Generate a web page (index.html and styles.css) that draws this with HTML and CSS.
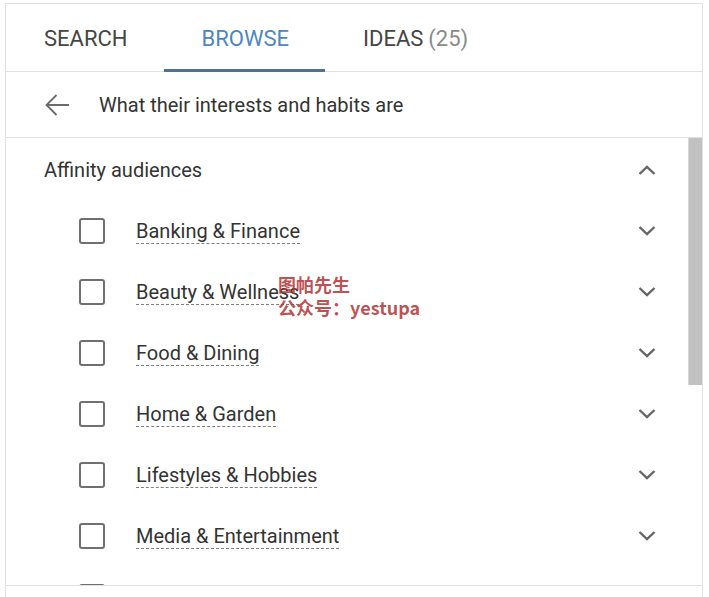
FILE: index.html
```html
<!DOCTYPE html>
<html lang="en">
<head>
   <meta charset="UTF-8">
   <title>Browse audiences</title>
   <link rel="stylesheet" href="styles.css">
</head>
<body>

<div class="panel">

   <div class="tabs">
      <div class="tab">SEARCH</div>
      <div class="tab active">BROWSE</div>
      <div class="tab">IDEAS <span class="count">(25)</span></div>
   </div>

   <div class="crumb">
      <svg class="back" width="26" height="24" viewBox="0 0 26 24">
         <path d="M25 12H2.5M12.5 2L2.5 12l10 10" fill="none" stroke="#6b6b6b" stroke-width="1.8"/>
      </svg>
      <span>What their interests and habits are</span>
   </div>

   <div class="scroller">
      <div class="list">
         <div class="group">
            <span>Affinity audiences</span>
            <svg class="chev" width="18" height="10" viewBox="0 0 18 10"><path d="M1.5 9L9 1.8 16.5 9" fill="none" stroke="#666" stroke-width="2.4"/></svg>
         </div>

         <div class="row"><i class="box"></i><span class="label">Banking &amp; Finance</span><svg class="chev" width="18" height="10" viewBox="0 0 18 10"><path d="M1.5 1L9 8.2 16.5 1" fill="none" stroke="#666" stroke-width="2.4"/></svg></div>
         <div class="row"><i class="box"></i><span class="label">Beauty &amp; Wellness</span><svg class="chev" width="18" height="10" viewBox="0 0 18 10"><path d="M1.5 1L9 8.2 16.5 1" fill="none" stroke="#666" stroke-width="2.4"/></svg></div>
         <div class="row"><i class="box"></i><span class="label">Food &amp; Dining</span><svg class="chev" width="18" height="10" viewBox="0 0 18 10"><path d="M1.5 1L9 8.2 16.5 1" fill="none" stroke="#666" stroke-width="2.4"/></svg></div>
         <div class="row"><i class="box"></i><span class="label">Home &amp; Garden</span><svg class="chev" width="18" height="10" viewBox="0 0 18 10"><path d="M1.5 1L9 8.2 16.5 1" fill="none" stroke="#666" stroke-width="2.4"/></svg></div>
         <div class="row"><i class="box"></i><span class="label">Lifestyles &amp; Hobbies</span><svg class="chev" width="18" height="10" viewBox="0 0 18 10"><path d="M1.5 1L9 8.2 16.5 1" fill="none" stroke="#666" stroke-width="2.4"/></svg></div>
         <div class="row"><i class="box"></i><span class="label">Media &amp; Entertainment</span><svg class="chev" width="18" height="10" viewBox="0 0 18 10"><path d="M1.5 1L9 8.2 16.5 1" fill="none" stroke="#666" stroke-width="2.4"/></svg></div>
         <div class="row"><i class="box"></i><span class="label">News &amp; Politics</span><svg class="chev" width="18" height="10" viewBox="0 0 18 10"><path d="M1.5 1L9 8.2 16.5 1" fill="none" stroke="#666" stroke-width="2.4"/></svg></div>
      </div>
      <div class="thumb"></div>
   </div>

   <div class="footer"></div>
</div>

<div class="mark">图帕先生<br>公众号：yestupa</div>

</body>
</html>
```

FILE: styles.css
```css
html {
   height: 100%;
   overflow: hidden;
}

body {
   margin: 0;
   background: #fff;
   font-family: Roboto, "Noto Sans", sans-serif;
   color: #333;
}

.panel {
   margin: 3px 6px 0 5px;
   border: 1px solid #e2e2e2;
   border-bottom: none;
   background: #fff;
}

/* tab strip */
.tabs {
   display: flex;
   height: 67px;
   border-bottom: 1px solid #e2e2e2;
}

.tab {
   display: flex;
   align-items: center;
   padding: 3px 36px 0 38px;
   font-size: 22px;
   color: #454545;
   border-bottom: 3px solid transparent;
   margin-bottom: -1px;
}

.tab.active {
   color: #4f86c2;
   border-bottom-color: #52708f;
}

.tab .count {
   color: #8a8a8a;
   margin-left: 5px;
}

/* breadcrumb */
.crumb {
   display: flex;
   align-items: center;
   height: 65px;
   padding-left: 38px;
   border-bottom: 1px solid #e2e2e2;
   font-size: 20px;
   color: #333;
}

.crumb .back {
   margin-right: 29px;
}

/* scrolling list */
.scroller {
   position: relative;
   height: 447px;
   overflow: hidden;
   border-bottom: 1px solid #e2e2e2;
}

.thumb {
   position: absolute;
   top: 0;
   right: 0;
   width: 13px;
   height: 247px;
   background: #c1c1c1;
   border-left: 1px solid #d6d6d6;
}

.group {
   display: flex;
   align-items: center;
   justify-content: space-between;
   height: 62px;
   padding: 2px 46px 0 38px;
   box-sizing: border-box;
   font-size: 20px;
   color: #333;
}

.row {
   display: flex;
   align-items: center;
   height: 61px;
   padding: 0 46px 0 73px;
}

.box {
   width: 22px;
   height: 22px;
   border: 2px solid #707070;
   border-radius: 3px;
   margin-right: 31px;
}

.label {
   font-size: 20px;
   color: #333;
   line-height: 24px;
   border-bottom: 1px dashed #808080;
   margin-top: 2px;
}

.row .chev {
   margin-left: auto;
}

.footer {
   height: 30px;
}

/* watermark over the list */
.mark {
   position: absolute;
   left: 278px;
   top: 273px;
   font-family: "Noto Sans CJK SC", sans-serif;
   font-weight: bold;
   font-size: 18px;
   line-height: 23px;
   color: rgba(178, 50, 50, 0.85);
}
```
